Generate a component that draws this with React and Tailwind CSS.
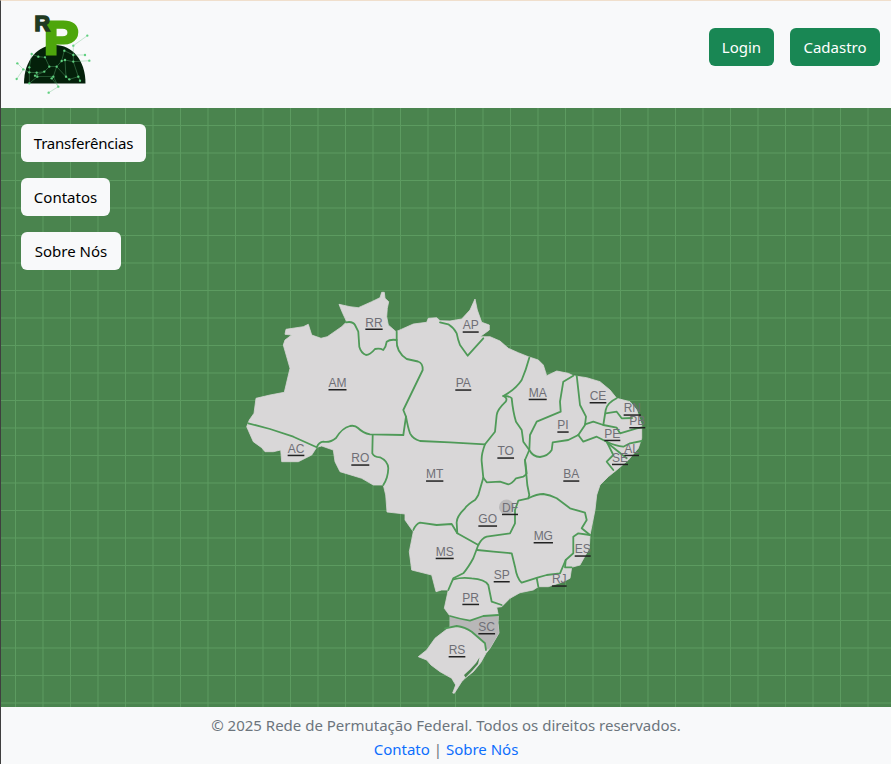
const coast =
  'M339 304.3 L350 306.7 L358.3 307.7 L371.7 301.7 L380 297.7 L381.7 292.3 L384.3 292.3 L385 298.3 L388.7 301.7 L387.3 308.3 L386.7 316.7 L388.3 325 L396 331.7 L413.3 324 L426.7 322.3 L428.3 318.3 L436.7 317.7 L440 320.7 L450 321 L461.7 319 L470 310 L475 299 L477.3 310 L481.7 322.3 L489.3 325 L489.3 330 L480 336.7 L490 336.7 L500 341 L508.3 348.3 L518.3 352.7 L528.3 356.7 L538.3 360 L543.3 365 L546.7 375.7 L556.7 371 L568.3 373.3 L573.3 375.7 L586.7 377.7 L600 381.7 L610 390 L616.7 398.3 L630 401.7 L636.7 410 L641.7 425 L641.7 438.3 L638.3 448.3 L628.3 460 L616.7 470 L608.3 476.7 L600 485 L596.7 495 L595 510 L590 535 L589.3 548.3 L580 565 L571.7 567.3 L570 578.3 L563.3 581.7 L548.3 586.7 L538.3 586.7 L533.3 590 L520 592.7 L510 598.3 L501.7 606.7 L496.7 607.3 L498.3 615 L498 623 L499 633 L490 648.3 L486 653.3 L480.7 662.7 L473.3 671.7 L465 678.3 L461.7 681.7 L454.3 693.3 L452.7 693 L455.7 685 L451.7 678.3 L440 671.7 L431 665 L426.7 660 L418.3 656.7 L426.7 650 L435 638.3 L450 626.7 L450 616 L444.3 608.3 L448.3 590 L441.7 590 L436 591.7 L431.7 575 L411.7 570 L409.3 551.7 L413.3 531.7 L405 520 L405 514 L387 512 L385.7 495 L383.3 485 L373.3 485 L361.7 478.3 L353.3 475.7 L340 471.7 L335 461.7 L333.3 450 L321.7 446 L316.7 447.3 L311.7 455 L298.3 461.7 L281.7 461.7 L280.7 450 L273.3 451.7 L265 451.7 L261.7 447.7 L253.3 441.7 L246.7 426.7 L249.3 420 L254 413.3 L256 398.3 L270 395 L284.3 392.3 L290 368.3 L283.3 345 L285 340 L291.7 335 L285 334.3 L286 329.3 L303.3 326.7 L308.3 324.3 L311.7 335 L321 338.3 L327.3 336.7 L341.7 326.7 L346.7 321.7 L342.7 313.3 Z'

const borders = [
  'M346 322.3 Q353 321 355 325 L358.3 331.7 L359.3 346.7 Q361 353 366 355 Q370 355 375 349 Q380 348 383.3 350 Q386 347 386.7 341.7 Q390 339 396.7 340',
  'M396.7 331.7 L396.7 340 Q396 352 406.7 359 L418 361.5 Q423 363 422.7 370 L403.3 410 L406 416.7 L403.3 435',
  'M248.3 423.3 L270 429 L293.3 436.7 L316.7 447.3 Q319 442 323.3 441.7 Q330 443 336 438 Q342 428 350 426 Q355 425 358 428 Q363 433 370 434.3 L403.3 435',
  'M372.7 435 L372.3 453.3 Q374 457 380 457.3 Q388 461 388.3 468.3 Q388 478 383.3 485',
  'M406 416.7 Q408 428 410 433.3 Q413 439 420 441 L450 442.3 L485 444.3',
  'M440 322.3 L448.3 324.3 Q454 328 456.7 333.3 Q458 340 460 345 L467.7 355.7 L483.3 338.3',
  'M529.3 357.7 Q526 370 521.7 380 Q515 390 503.3 396 Q508 398 505.7 401.7 Q497 410 496.7 415 L495 431.7 L485 444.3 Q481 455 481.7 461.7 L483.3 477.7 L478.3 495 Q476 499 475 500 Q468 504 465 508.3 Q456 517 456.7 523.3 L457.3 533.3',
  'M503.3 396 Q510 396 511.7 398.3 Q513 412 516 421.7 L521.7 430 L523.3 441.7 L529.3 450 L525 460 L526.7 473.3 Q525 476 523.3 476.7 L516 478.3 Q512 484 508.3 484.3 L500 481.7 L486.7 482.3 L483.3 477.7',
  'M413.3 530 Q416 524 420 522.7 L436.7 525 L451.7 524 L457.3 533.3 L478.3 545',
  'M478.3 545 L473.3 558.3 Q468 568 463.3 573.3 L453.3 578.3 L448.3 590',
  'M477.3 550 L493.3 551.7 L511.7 553.3 L515 566.7 Q517 579 521.7 582.7 L538.3 577.3 L546.7 575 L560 573.3 L565.7 560 L573.3 553.3 L573.3 536.7 L578.3 533.3 L590 535',
  'M536.7 578 L538.3 586.7',
  'M565.7 560 L565 567.3 L571.7 567.3',
  'M478.3 545 Q482 538 486.7 536.7 L510 533.3 L515 523.3 L515 510 L518.3 500.7 L528.3 498.3 Q537 494 543.3 494 Q550 495 556.7 498.3 L570 508.3 L585 512.7 L586.7 520 L581.7 528.3 L590 535',
  'M525 460 L527.3 485 L529.3 495 L528.3 498.3',
  'M453.3 579.3 Q462 577 471.7 578.3 Q485 579 488.3 585 L491.7 601.7 L501.7 605',
  'M450 616 Q460 619 470 620.7 L483.3 616 L498.3 615',
  'M445 628.3 L456.7 626 Q465 627 471.7 631.7 L485 643.3 L486 650',
  'M573.3 375.7 L563.3 381.7 L560 401.7 L560.7 411.7 L536.7 421.7 L530 435 L529.3 450 Q533 457 540 457 Q548 456 551.7 450 L552.7 442.3 L568.3 440 L578.3 435',
  'M576.7 375.7 L580 405 L586 416.7 L585 425 L578.3 435',
  'M585 424.3 L593.3 421.7 L603.3 425 L616.7 427.7 L620 433.3 L636.7 428.3 L641.7 427.5',
  'M616.7 398.3 Q607 403 605.7 410 L603.3 425',
  'M605.7 413.3 L616.7 411.7 L621.7 418.3 L632 418',
  'M578.3 435 L583.3 441.7 L596.7 436.7 L606.7 441.7 L613.3 455 L606.7 461.7 L613.3 470',
  'M606.7 441.7 Q616 446 623.3 446.7 L630 443.3 L641.7 441',
  'M607.5 443 L626.7 458.3',
]

const labels = [
  ['RR', 374, 326.5, 17.3], ['AM', 337.5, 387, 18], ['AC', 296, 452.7, 16.7], ['RO', 360.3, 462.3, 18],
  ['MT', 434.7, 478.3, 17.3], ['AP', 470.7, 329.3, 16], ['PA', 463.3, 387.3, 16], ['MA', 537.7, 396.7, 18],
  ['CE', 598, 400, 16.7], ['RN', 632.3, 412.3, 17.3], ['PB', 637.3, 425, 16], ['PI', 563, 429.3, 11.3],
  ['PE', 612.3, 437.7, 16], ['AL', 631.7, 452.7, 14.7], ['SE', 620, 461.7, 16], ['TO', 505.7, 455.3, 16.7],
  ['BA', 571.3, 478.3, 16], ['DF', 510, 511.7, 16], ['GO', 487.7, 523.3, 18.7], ['MG', 543.3, 540, 19.3],
  ['MS', 444.7, 555.7, 18], ['ES', 582.7, 553.3, 16], ['SP', 501.7, 579, 16], ['RJ', 559.3, 583.3, 14.7],
  ['PR', 470.7, 601.7, 16.7], ['SC', 486.7, 631, 16.7], ['RS', 457, 654, 16.7],
]

function BrazilMap() {
  return (
    <svg viewBox="240 288 412 412" className="self-center mt-[2px] w-[412px] h-[412px] shrink-0">
      <path d={coast} fill="#d9d7d8" stroke="#d9d7d8" strokeWidth="0.8" strokeLinejoin="round" />
      <path d="M450 616 L470 620.7 L483.3 616 L498.3 615 L498 623 L499 633 L490 648.3 L486 650 L485 643.3 L471.7 631.7 L456.7 626 L450 626.7 Z" fill="#b8b7b8" />
      <circle cx="506.5" cy="507" r="7.5" fill="#bcbbbc" />
      <path d="M479.5 657.5 L476 663 L470 669.5 L464 675 L465.5 677.5 L472 671 L478 664 Z" fill="#4a844e" />
      {borders.map((d) => (
        <path key={d} d={d} fill="none" stroke="#4f9a58" strokeWidth="1.8" strokeLinejoin="round" strokeLinecap="round" />
      ))}
      {labels.map(([name, x, y, w]) => (
        <g key={name}>
          <text x={x} y={y} textAnchor="middle" fontSize="12" fontFamily="'Liberation Sans', Arial, sans-serif" fill="#6f6f76">
            {name}
          </text>
          <rect x={x - w / 2} y={y + 2} width={w} height="1.5" fill="#222" />
        </g>
      ))}
    </svg>
  )
}

const nodes = [
  [65, 132], [85, 140], [105, 142], [163, 122], [165, 150], [190, 155], [190, 135], [58, 172], [58, 187], [80, 188],
  [103, 185], [118, 170], [140, 170], [155, 153], [82, 200], [130, 200], [168, 200], [178, 208], [205, 200], [210, 212],
  [58, 220], [125, 205], [75, 197], [232, 77], [190, 107], [225, 135], [238, 152], [22, 160], [40, 178], [20, 207],
  [116, 248], [145, 230],
]

const links = [
  [0, 1], [1, 2], [2, 11], [11, 12], [12, 13], [13, 4], [4, 5], [5, 6], [3, 6], [6, 25], [24, 23], [24, 6], [5, 26],
  [7, 8], [8, 9], [9, 10], [10, 11], [9, 14], [14, 15], [15, 12], [12, 16], [16, 17], [17, 18], [18, 19], [5, 18],
  [7, 0], [27, 28], [28, 8], [28, 29], [8, 20], [20, 14], [15, 31], [31, 30], [13, 3], [4, 16], [10, 22], [21, 31],
]

function Logo() {
  return (
    <svg viewBox="1 1 100 100" className="w-[100px] h-[100px] shrink-0">
      <path d="M24 83.5 C24 60 38 45 55 45 C72 45 85.5 60 85.5 83.5 Z" fill="#04200a" />
      <g transform="translate(10 10) scale(0.3333)">
        {links.map(([a, b]) => (
          <line key={`${a}-${b}`} x1={nodes[a][0]} y1={nodes[a][1]} x2={nodes[b][0]} y2={nodes[b][1]} stroke="#6cc585" strokeWidth="1.3" opacity="0.85" />
        ))}
        {nodes.map(([x, y]) => (
          <circle key={`${x}-${y}`} cx={x} cy={y} r="3.5" fill="#5fd07f" />
        ))}
      </g>
      <text transform="translate(44 53.5) scale(1.12 1)" fontSize="46" fontWeight="700" fontFamily="'Liberation Sans', sans-serif" fill="#4ea60c" stroke="#4ea60c" strokeWidth="3">
        P
      </text>
      <text x="34.5" y="31.2" fontSize="21.5" fontWeight="700" fontFamily="'Liberation Sans', sans-serif" fill="#1f3a22" stroke="#1f3a22" strokeWidth="1.6">
        R
      </text>
    </svg>
  )
}

function NavButton({ width, children }) {
  return <button className={`self-start shrink-0 h-[38px] rounded-md bg-[#f8f9fa] text-black ${width}`}>{children}</button>
}

export default function App() {
  return (
    <div className="h-screen flex flex-col overflow-hidden border-t border-l border-t-[#f0dfcc] border-l-[#3f3f3f] bg-[#f8f9fa] font-['Noto_Sans',sans-serif] text-[15px]">
      <header className="h-[107px] shrink-0 flex items-start justify-between pr-[11px]">
        <Logo />
        <div className="flex gap-4 mt-[27px]">
          <button className="h-[38px] w-[65px] rounded-md bg-[#198754] text-white">Login</button>
          <button className="h-[38px] w-[90px] rounded-md bg-[#198754] text-white">Cadastro</button>
        </div>
      </header>

      <main className="flex-1 min-h-0 flex flex-col gap-4 px-5 pt-4 overflow-hidden bg-[#4a844e] bg-[linear-gradient(#5c9b60_1px,transparent_1px),linear-gradient(90deg,#5c9b60_1px,transparent_1px)] bg-[size:27.5px_27.5px] bg-[position:14px_17px]">
        <NavButton width="w-[125px] tracking-[-0.2px]">Transferências</NavButton>
        <NavButton width="w-[89px]">Contatos</NavButton>
        <NavButton width="w-[100px]">Sobre Nós</NavButton>
        <BrazilMap />
      </main>

      <footer className="h-[57px] shrink-0 pt-[6px] text-center text-[#6c757d] leading-6">
        <p>© 2025 Rede de Permutação Federal. Todos os direitos reservados.</p>
        <p>
          <a className="text-[#0d6efd]" href="#contato">Contato</a> | <a className="text-[#0d6efd]" href="#sobre">Sobre Nós</a>
        </p>
      </footer>
    </div>
  )
}
